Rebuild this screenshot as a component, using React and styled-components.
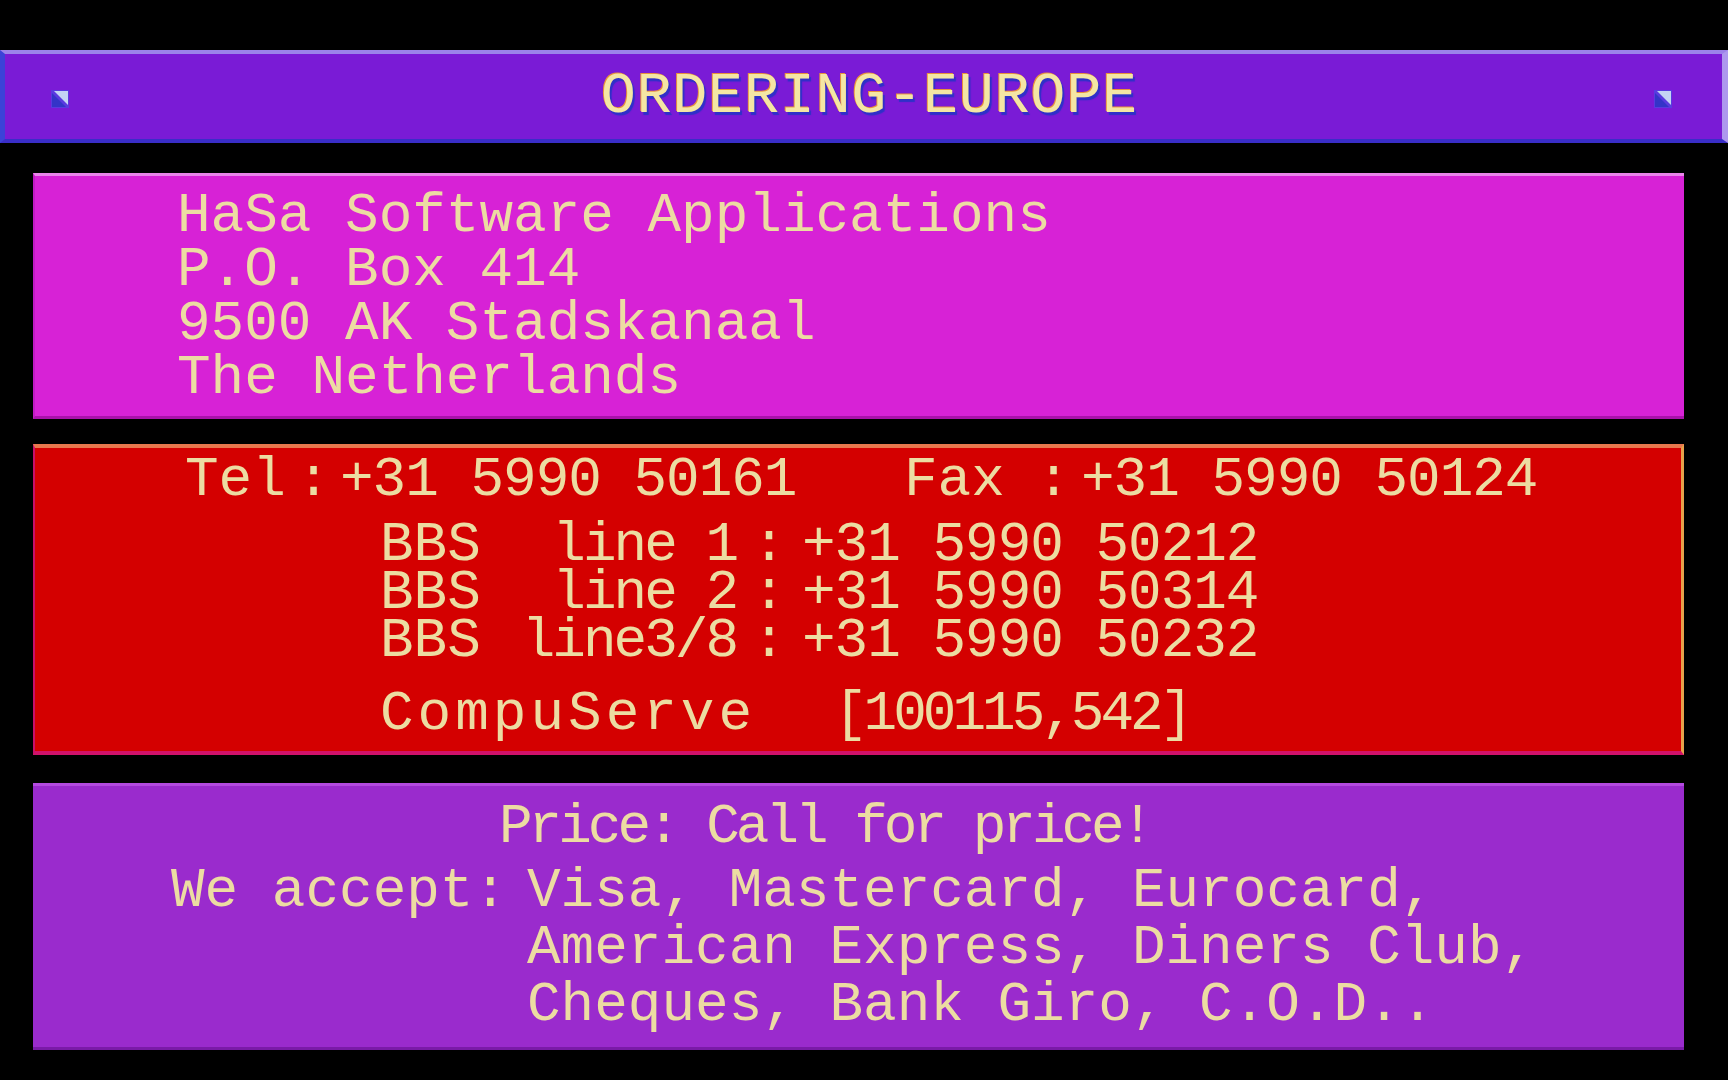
import React from 'react';
import styled, { createGlobalStyle, css } from 'styled-components';

const GlobalStyle = createGlobalStyle`
  html, body {
    margin: 0;
    padding: 0;
    background: #000;
  }

  body {
    font-family: "Liberation Mono", "DejaVu Sans Mono", monospace;
    color: #ecdca2;
  }
`;

const tones = {
  magenta: css`
    background: #d722d6;
    border-top: 3px solid #ea86ea;
    border-left: 2px solid #c21ac4;
    border-bottom: 3px solid #a812aa;
  `,
  red: css`
    background: #d40000;
    border-top: 4px solid #e8784e;
    border-right: 3px solid #e8a24a;
    border-left: 2px solid #c8106a;
    border-bottom: 4px solid #d0126a;
  `,
  purple: css`
    background: #9a2bcd;
    border-top: 3px solid #b44ae0;
    border-bottom: 3px solid #7a1aa8;
  `,
};

const Page = () => {
  return (
    <>
      <GlobalStyle />
      <Screen>
        <TitleBar>
          <Corner />
          <Title>ORDERING-EUROPE</Title>
          <Corner />
        </TitleBar>

        <Panel $tone="magenta" $top={30} $height={246}>
          <Address>
            <div>HaSa Software Applications</div>
            <div>P.O. Box 414</div>
            <div>9500 AK Stadskanaal</div>
            <div>The Netherlands</div>
          </Address>
        </Panel>

        <Panel $tone="red" $top={25} $height={311}>
          <TopRow>
            <PhoneEntry label="Tel" $labelWidth={102} $colonWidth={53} $numberWidth={564} number="+31 5990 50161" />
            <PhoneEntry label="Fax" $labelWidth={122} $colonWidth={55} number="+31 5990 50124" />
          </TopRow>
          <BbsList>
            <BbsLine line="line 1" number="+31 5990 50212" />
            <BbsLine line="line 2" number="+31 5990 50314" />
            <BbsLine line="line3/8" number="+31 5990 50232" />
          </BbsList>
          <CompuRow>
            <CompuLabel>CompuServe</CompuLabel>
            <CompuId>[100115,542]</CompuId>
          </CompuRow>
        </Panel>

        <Panel $tone="purple" $top={28} $height={267}>
          <PriceLine>Price: Call for price!</PriceLine>
          <AcceptBlock>
            <AcceptLabel>We accept:</AcceptLabel>
            <AcceptList>
              <div>Visa, Mastercard, Eurocard,</div>
              <div>American Express, Diners Club,</div>
              <div>Cheques, Bank Giro, C.O.D..</div>
            </AcceptList>
          </AcceptBlock>
        </Panel>
      </Screen>
    </>
  );
};

const Corner = () => (
  <CornerIcon viewBox="0 0 18 18">
    <rect x="0" y="0" width="18" height="18" fill="#5a3ae0" />
    <polygon points="3,1 17,1 17,15" fill="#c4d4f4" />
    <polygon points="1,3 1,17 15,17" fill="#3434c8" />
  </CornerIcon>
);

const PhoneEntry = ({ label, number, $labelWidth, $colonWidth, $numberWidth }) => (
  <Entry>
    <Label $width={$labelWidth}>{label}</Label>
    <Colon $width={$colonWidth}>:</Colon>
    <NumberText $width={$numberWidth}>{number}</NumberText>
  </Entry>
);

const BbsLine = ({ line, number }) => (
  <BbsRow>
    <BbsName>
      <span>BBS</span>
      <LineLabel>{line}</LineLabel>
    </BbsName>
    <Colon $width={66}>:</Colon>
    <NumberText>{number}</NumberText>
  </BbsRow>
);

export default Page;

const Screen = styled.div`
  display: flex;
  flex-direction: column;
  min-height: 100vh;
  padding-top: 50px;
  box-sizing: border-box;
  background: #000;
`;

const TitleBar = styled.div`
  display: flex;
  align-items: center;
  justify-content: space-between;
  box-sizing: border-box;
  height: 93px;
  padding: 0 50px 0 46px;
  background: #7a1bd6;
  border-top: 4px solid #9c82ea;
  border-left: 5px solid #3c42d8;
  border-right: 6px solid #ad98ee;
  border-bottom: 4px solid #3a2ec8;
`;

const CornerIcon = styled.svg`
  width: 18px;
  height: 18px;
  margin-top: 4px;
`;

const Title = styled.h1`
  margin: 0 0 0 16px;
  font-family: "Liberation Mono", "DejaVu Sans Mono", monospace;
  font-size: 58px;
  font-weight: 400;
  letter-spacing: 1px;
  line-height: 1;
  color: #f4e6a4;
  text-shadow: -1px -1px 0 #e8923c, 2px 3px 1px #2f30c8;
`;

const Panel = styled.section`
  display: flex;
  flex-direction: column;
  box-sizing: border-box;
  width: 1651px;
  height: ${({ $height }) => $height}px;
  margin: ${({ $top }) => $top}px 0 0 33px;
  font-size: 56px;
  ${({ $tone }) => tones[$tone]}
`;

const Address = styled.div`
  padding: 13px 0 0 142px;
  line-height: 54px;
  white-space: pre;
`;

const TopRow = styled.div`
  display: flex;
  padding: 7px 0 0 150px;
  line-height: 50px;
`;

const Entry = styled.div`
  display: flex;
  white-space: pre;
`;

const Label = styled.span`
  width: ${({ $width }) => $width}px;
`;

const Colon = styled.span`
  width: ${({ $width }) => $width}px;
  text-align: center;
`;

const NumberText = styled.span`
  width: ${({ $width }) => ($width ? `${$width}px` : 'auto')};
  letter-spacing: -1px;
`;

const BbsList = styled.div`
  display: flex;
  flex-direction: column;
  padding: 16px 0 0 345px;
  line-height: 48px;
`;

const BbsRow = styled.div`
  display: flex;
  white-space: pre;
`;

const BbsName = styled.span`
  display: flex;
  justify-content: space-between;
  width: 356px;
`;

const LineLabel = styled.span`
  letter-spacing: -3px;
`;

const CompuRow = styled.div`
  display: flex;
  padding: 24px 0 0 345px;
  line-height: 50px;
`;

const CompuLabel = styled.span`
  width: 454px;
  letter-spacing: 4px;
`;

const CompuId = styled.span`
  letter-spacing: -4px;
`;

const PriceLine = styled.div`
  padding: 13px 0 0 466px;
  line-height: 56px;
  letter-spacing: -4px;
`;

const AcceptBlock = styled.div`
  display: flex;
  padding: 8px 0 0 138px;
  line-height: 57px;
`;

const AcceptLabel = styled.span`
  width: 356px;
  white-space: pre;
`;

const AcceptList = styled.div`
  display: flex;
  flex-direction: column;
  white-space: pre;
`;
